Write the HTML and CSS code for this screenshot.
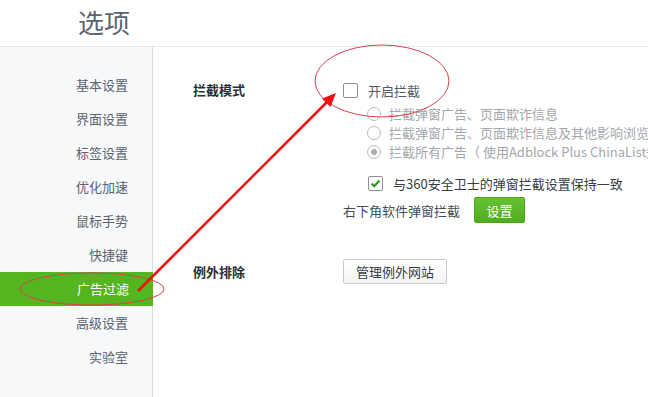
FILE: index.html
```html
<!DOCTYPE html>
<html>
<head>
<meta charset="utf-8">
<link rel="stylesheet" href="styles.css">
</head>
<body>
<div class="page">
  <header class="header"><h1 class="title">选项</h1></header>
  <div class="body">
    <nav class="sidebar">
      <div class="nav-item">基本设置</div>
      <div class="nav-item">界面设置</div>
      <div class="nav-item">标签设置</div>
      <div class="nav-item">优化加速</div>
      <div class="nav-item">鼠标手势</div>
      <div class="nav-item">快捷键</div>
      <div class="nav-item active">广告过滤</div>
      <div class="nav-item">高级设置</div>
      <div class="nav-item">实验室</div>
    </nav>
    <main class="main">
      <section class="section">
        <div class="label">拦截模式</div>
        <div class="content">
          <label class="row row-check"><span class="checkbox"></span><span class="check-text">开启拦截</span></label>
          <div class="radios">
            <div class="radio-row"><span class="radio"></span>拦截弹窗广告、页面欺诈信息</div>
            <div class="radio-row"><span class="radio"></span>拦截弹窗广告、页面欺诈信息及其他影响浏览体验的广告</div>
            <div class="radio-row"><span class="radio checked"></span>拦截所有广告（ 使用Adblock Plus ChinaList规则）</div>
          </div>
          <label class="row row-sync"><span class="checkbox on"><svg viewBox="0 0 15 15" width="15" height="15"><path d="M3.6 7.6 L6.3 10.2 L11.4 4.6" fill="none" stroke="#2f9a18" stroke-width="2.2"/></svg></span><span class="sync-text">与360安全卫士的弹窗拦截设置保持一致</span></label>
          <div class="row row-corner"><span class="corner-text">右下角软件弹窗拦截</span><button class="btn-green">设置</button></div>
        </div>
      </section>
      <section class="section section-except">
        <div class="label">例外排除</div>
        <div class="content"><button class="btn-plain">管理例外网站</button></div>
      </section>
    </main>
  </div>
  <svg class="annot" width="648" height="397" viewBox="0 0 648 397">
    <ellipse cx="382" cy="81" rx="67" ry="36" fill="none" stroke="#d8414d" stroke-width="1"/>
    <ellipse cx="92" cy="289" rx="72" ry="16" fill="none" stroke="#d8414d" stroke-width="1"/>
    <line x1="138" y1="291" x2="328" y2="101" stroke="#ee1111" stroke-width="2.6"/>
    <polygon points="336,93 330.5,107 322,98.5" fill="#ee1111"/>
  </svg>
</div>
</body>
</html>
```
FILE: styles.css
```css
* { box-sizing: border-box; }
html, body { margin: 0; padding: 0; }
body {
  width: 648px;
  height: 397px;
  overflow: hidden;
  font-family: "Noto Sans CJK SC", "Liberation Sans", sans-serif;
  font-size: 13px;
  background: #ffffff;
}
.page { position: relative; width: 648px; height: 397px; display: flex; flex-direction: column; }
.header {
  height: 47px;
  flex: none;
  border-bottom: 1px solid #e6e8eb;
  display: flex;
  align-items: center;
  padding-left: 78px;
}
.title {
  margin: 0;
  font-size: 26px;
  font-weight: normal;
  color: #5b6572;
  line-height: 30px;
  margin-top: -3px;
}
.body { flex: 1; display: flex; }
.sidebar {
  width: 153px;
  flex: none;
  background: #f7f8fa;
  border-right: 1px solid #d9dce0;
  padding-top: 21px;
}
.nav-item {
  height: 34px;
  line-height: 34px;
  text-align: right;
  padding-right: 24px;
  color: #5a636e;
  font-size: 13px;
}
.nav-item.active {
  background: #54b51f;
  color: #ffffff;
  margin-right: -1px;
}
.main {
  flex: 1;
  padding-top: 33px;
  padding-left: 40px;
  white-space: nowrap;
  overflow: hidden;
}
.section { display: flex; }
.label {
  width: 150px;
  flex: none;
  font-weight: bold;
  color: #26303a;
  height: 20px;
  line-height: 20px;
}
.content { display: flex; flex-direction: column; }
.row { display: flex; align-items: center; }
.row-check { height: 20px; }
.checkbox {
  width: 15px;
  height: 15px;
  border: 1px solid #8c9097;
  border-radius: 2px;
  background: #fff;
  display: inline-flex;
  align-items: center;
  justify-content: center;
  flex: none;
}
.checkbox svg { display: block; margin: -1px; }
.check-text { margin-left: 10px; color: #4f5a66; }
.radios { margin-top: 4px; padding-left: 24px; display: flex; flex-direction: column; }
.radio-row {
  height: 19px;
  display: flex;
  align-items: center;
  color: #a3a7ab;
}
.radio {
  width: 14px;
  height: 14px;
  border: 1px solid #b9bcc0;
  border-radius: 50%;
  background: #fff;
  margin-right: 8px;
  flex: none;
  display: inline-flex;
  align-items: center;
  justify-content: center;
}
.radio.checked::after {
  content: "";
  width: 6px;
  height: 6px;
  border-radius: 50%;
  background: #a8abaf;
}
.row-sync { height: 20px; margin-top: 12px; padding-left: 25px; }
.sync-text { margin-left: 10px; color: #353d46; }
.row-corner { height: 26px; margin-top: 4px; }
.corner-text { color: #454d56; width: 131px; }
.btn-green {
  width: 51px;
  height: 26px;
  border: 1px solid #4aa51a;
  border-radius: 2px;
  background: linear-gradient(#66c232, #50ad1e);
  color: #ffffff;
  font-family: inherit;
  font-size: 13px;
  padding: 0;
}
.section-except { margin-top: 36px; }
.section-except .label { height: 25px; line-height: 25px; }
.btn-plain {
  width: 104px;
  height: 25px;
  border: 1px solid #c8cbcf;
  border-radius: 2px;
  background: linear-gradient(#ffffff, #f3f4f5);
  color: #353d46;
  font-family: inherit;
  font-size: 13px;
  padding: 0;
}
.annot { position: absolute; left: 0; top: 0; pointer-events: none; }
```
